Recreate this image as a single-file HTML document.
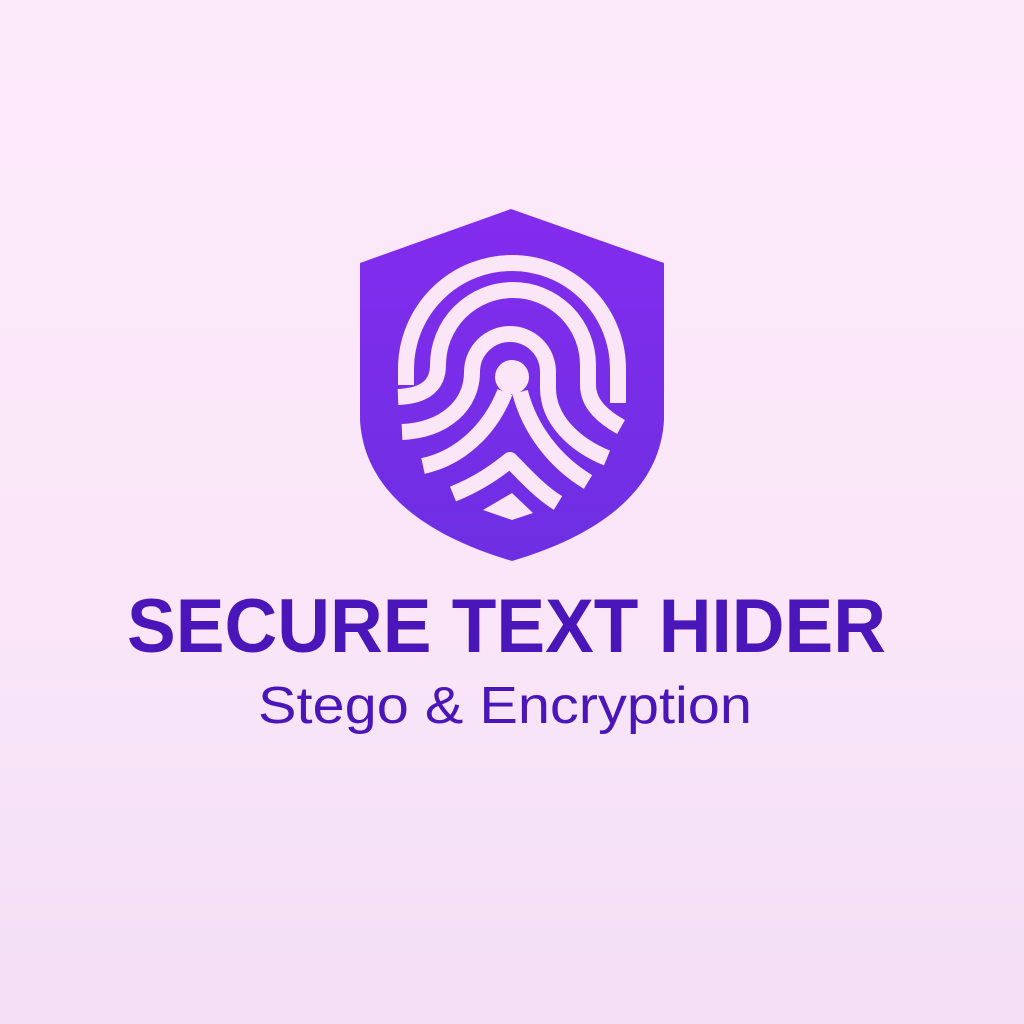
<!DOCTYPE html>
<html><head><meta charset="utf-8"><style>
html,body{margin:0;padding:0;width:1024px;height:1024px;overflow:hidden}
body{background:linear-gradient(180deg,#fce9fa 0%,#fae6f8 60%,#f3def6 100%)}
</style></head><body>
<svg width="1024" height="1024" viewBox="0 0 1024 1024" xmlns="http://www.w3.org/2000/svg">
<defs><linearGradient id="sg" x1="0" y1="0" x2="0" y2="1"><stop offset="0" stop-color="#832cee"/><stop offset="1" stop-color="#6d2fe2"/></linearGradient></defs>
<path d="M511,209 L664,263 L664,420 C660,490 600,535 512,561 C424,535 364,490 360,420 L360,263 Z" fill="url(#sg)"/>
<g fill="none" stroke="#fbe6f8" stroke-width="16" stroke-linejoin="round">
<path d="M406,385 L406,369 A106,106 0 0 1 618,369 L618,403"/>
<path d="M398,397 C425,396 438,385 438,365 A75,75 0 0 1 588,365 L588,385 C588,405 605,418 621,427"/>
<path d="M402,432 C445,430 472,405 472,372 A38,38 0 0 1 548,372 L548,388 C548,420 575,445 607,458"/>
<path d="M505,392 C490,430 460,458 423,466"/>
<path d="M520,392 C530,430 555,462 588,482"/>
<path d="M453,494 C478,484 495,472 510,460 C525,475 540,492 558,503"/>
</g>
<circle cx="512" cy="377" r="17" fill="#fbe6f8"/>
<path d="M512,493 L483,510 L512,520 L533,513 Z" fill="#fbe6f8"/>
<text x="127" y="652" font-family="Liberation Sans, sans-serif" font-weight="bold" font-size="76" fill="#4a16ba" textLength="759" lengthAdjust="spacingAndGlyphs">SECURE TEXT HIDER</text>
<text x="258" y="723" font-family="Liberation Sans, sans-serif" font-size="52" fill="#4a16ba" textLength="494" lengthAdjust="spacingAndGlyphs">Stego &amp; Encryption</text>
</svg>
</body></html>
